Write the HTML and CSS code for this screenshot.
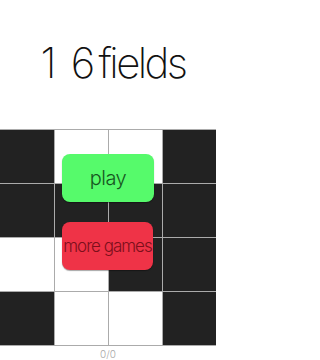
FILE: index.html
```html
<!DOCTYPE html>
<html>
<head>
<meta charset="utf-8">
<link rel="stylesheet" href="styles.css">
</head>
<body>
<div class="screen">
  <header class="header">
    <h1 class="title"><span class="num">1 6</span> <span class="word">fields</span></h1>
  </header>
  <main class="board">
    <div class="grid">
      <div class="cell black"></div><div class="cell"></div><div class="cell"></div><div class="cell black"></div>
      <div class="cell black"></div><div class="cell black"></div><div class="cell black"></div><div class="cell black"></div>
      <div class="cell"></div><div class="cell"></div><div class="cell black"></div><div class="cell black"></div>
      <div class="cell black"></div><div class="cell"></div><div class="cell"></div><div class="cell black"></div>
    </div>
    <button class="btn btn-play">play</button>
    <button class="btn btn-more">more games</button>
  </main>
  <footer class="footer">0/0</footer>
</div>
</body>
</html>
```
FILE: styles.css
```css
html, body {
  margin: 0;
  padding: 0;
  background: #ffffff;
}
.screen {
  width: 216px;
  height: 360px;
  display: flex;
  flex-direction: column;
  overflow: hidden;
  font-family: "Inter", "Liberation Sans", sans-serif;
}
.header {
  height: 130px;
  display: flex;
  align-items: flex-start;
  justify-content: center;
  padding-left: 10px;
  box-sizing: border-box;
}
.title {
  margin: 38px 0 0 0;
  display: flex;
  gap: 5px;
  font-size: 42px;
  line-height: 50px;
  font-weight: 200;
  color: #111;
  letter-spacing: -1.8px;
}
.num {
  word-spacing: 6px;
}
.word {
  letter-spacing: -2.6px;
}
.board {
  position: relative;
  height: 217px;
}
.grid {
  display: grid;
  grid-template-columns: 54px 53px 53px 53px;
  grid-template-rows: repeat(4, 53px);
  gap: 1px;
  background: #ababab;
  border-top: 1px solid #ababab;
  border-bottom: 1px solid #ababab;
}
.cell {
  background: #ffffff;
}
.cell.black {
  background: #222222;
}
.btn {
  position: absolute;
  left: 62px;
  width: 92px;
  height: 48px;
  border: none;
  border-radius: 8px;
  padding: 0;
  font-family: "Inter", "Liberation Sans", sans-serif;
  font-weight: 300;
  box-shadow: 0 1px 1px rgba(0, 0, 0, 0.35);
}
.btn-play {
  top: 25px;
  background: #56fa6b;
  color: #16561f;
  font-size: 20px;
  letter-spacing: -0.5px;
}
.btn-more {
  top: 93px;
  width: 91px;
  background: #ef3347;
  color: #7c0f1b;
  font-size: 17px;
  letter-spacing: -1px;
  white-space: nowrap;
}
.footer {
  flex: 1;
  text-align: center;
  font-size: 10px;
  line-height: 12px;
  padding-top: 2px;
  color: #a8a8a8;
  font-weight: 300;
}
```
